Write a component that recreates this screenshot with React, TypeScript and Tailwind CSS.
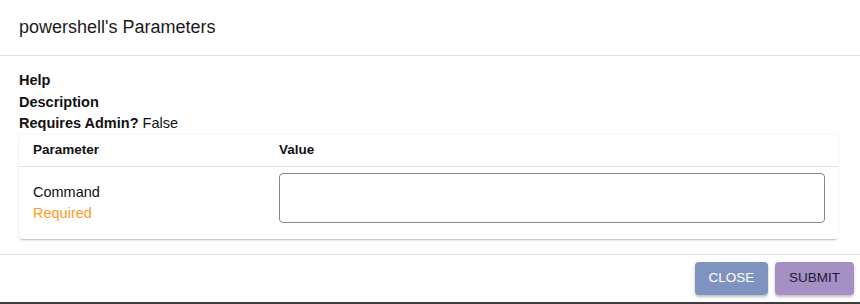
export default function App() {
  return (
    <div className="w-[860px] h-[304px] bg-white flex flex-col text-[#111] font-['Liberation_Sans',Arial,sans-serif] overflow-hidden">
      {/* Title */}
      <div className="h-[56px] shrink-0 flex items-center px-[19px] border-b border-[#dedede]">
        <h2 className="text-[18px] text-[#1a1a1a]">powershell's Parameters</h2>
      </div>

      {/* Body */}
      <div className="px-[19px] pt-[14px] pb-[15px] border-b border-[#dedede] text-[14.5px]">
        <div className="leading-[21.5px] font-bold">Help</div>
        <div className="leading-[21.5px] font-bold">Description</div>
        <div className="leading-[21.5px]">
          <span className="font-bold">Requires Admin?</span> False
        </div>

        <div className="mt-[0.5px] w-[819px] rounded-[4px] bg-white shadow-[0_2px_2px_-1px_rgba(0,0,0,0.25),0_0_2px_rgba(0,0,0,0.12)]">
          <div className="h-[32px] flex items-center border-b border-[#e2e2e2] font-bold text-[13.5px]">
            <div className="w-[260px] pl-[14px]">Parameter</div>
            <div>Value</div>
          </div>
          <div className="h-[72px] flex items-start">
            <div className="w-[260px] pl-[14px] pt-[15px] flex flex-col leading-[21px]">
              <span>Command</span>
              <span className="text-[#ff9c1f]">Required</span>
            </div>
            <div className="mt-[6px] w-[546px] h-[50px] rounded-[4px] border border-[#858585]" />
          </div>
        </div>
      </div>

      {/* Footer */}
      <div className="flex-1 flex justify-end items-start pt-[7px] pr-[6px] gap-[7px]">
        <button className="h-[33px] w-[73px] rounded-[4px] bg-[#7f93c1] text-white text-[13.5px] shadow-[0_2px_3px_rgba(0,0,0,0.25)]">
          CLOSE
        </button>
        <button className="h-[33px] w-[79px] rounded-[4px] bg-[#a68fc3] text-[#1d1b3a] text-[13.5px] shadow-[0_2px_3px_rgba(0,0,0,0.25)]">
          SUBMIT
        </button>
      </div>
      <div className="h-[2px] shrink-0 bg-[#3d3d3d]" />
    </div>
  );
}
